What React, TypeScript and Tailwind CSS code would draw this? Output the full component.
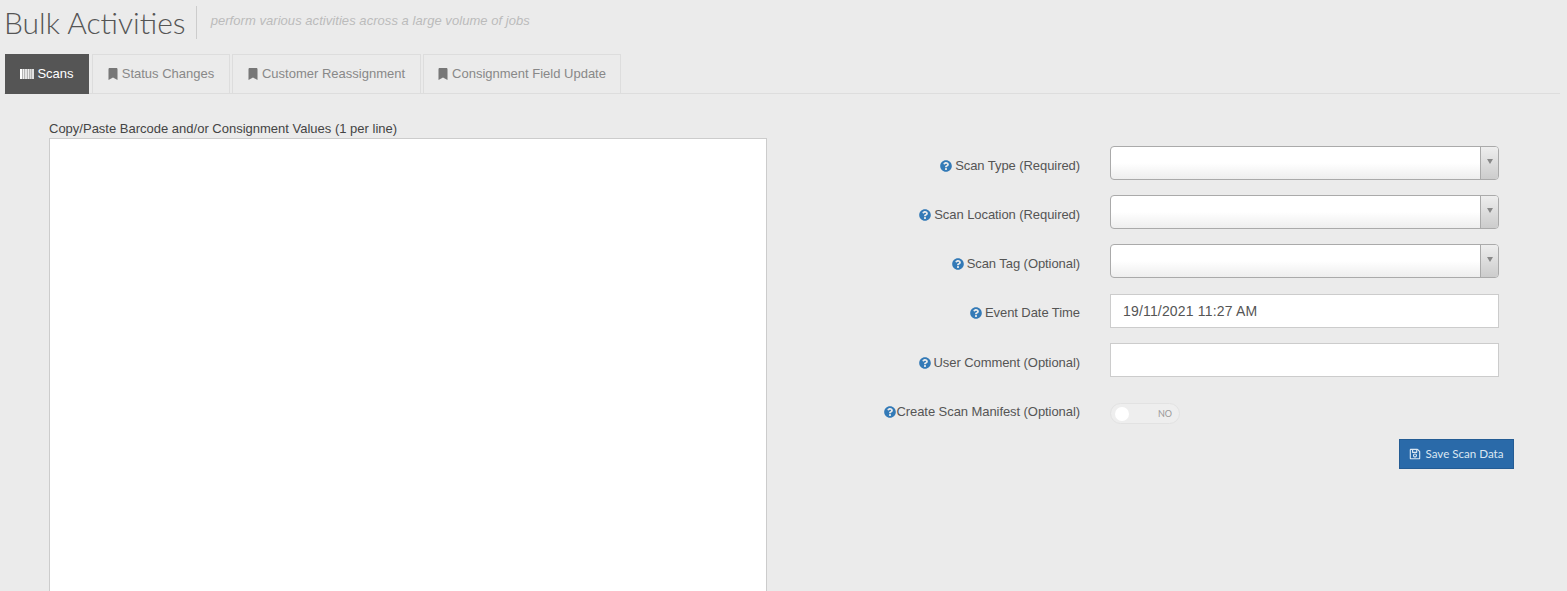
import { FaBookmark, FaQuestionCircle, FaRegSave } from "react-icons/fa";

const tabs = [
  { label: "Status Changes", width: "w-[138px]" },
  { label: "Customer Reassignment", width: "w-[189px]" },
  { label: "Consignment Field Update", width: "w-[198px]" },
];

function HelpIcon() {
  return <FaQuestionCircle className="text-[12px] text-[#337ab7] shrink-0" />;
}

function FieldLabel({ text, tight, raised }: { text: string; tight?: boolean; raised?: boolean }) {
  return (
    <label className={`w-[300px] flex items-center justify-end text-[13px] tracking-[-0.07px] text-[#555] ${raised ? "pt-[4px]" : "pt-[6px]"} ${tight ? "gap-0" : "gap-[3px]"}`}>
      <HelpIcon />
      <span>{text}</span>
    </label>
  );
}

function SelectBox() {
  return (
    <div className="w-[389px] h-[34px] flex rounded-[4px] border border-[#aaa] bg-gradient-to-b from-white from-50% to-[#eeeeee] overflow-hidden">
      <div className="flex-1" />
      <div className="w-[18px] border-l border-[#aaa] bg-gradient-to-b from-[#eeeeee] to-[#cccccc] flex items-center justify-center">
        <div className="w-0 h-0 mb-[3px] border-x-[3.5px] border-x-transparent border-t-[5px] border-t-[#888]" />
      </div>
    </div>
  );
}

function TextBox({ value }: { value?: string }) {
  return (
    <div className="w-[389px] h-[34px] border border-[#ccc] bg-white px-3 flex items-center text-[14px] tracking-[0.17px] text-[#555]">
      {value}
    </div>
  );
}

function BarcodeIcon() {
  return (
    <svg width="14" height="10" viewBox="0 0 14 10" className="shrink-0">
      <rect x="0" width="14" height="10" fill="#b5b5b5" />
      <rect x="0" width="2" height="10" fill="#fff" />
      <rect x="3" width="1" height="10" fill="#f0f0f0" />
      <rect x="5" width="2" height="10" fill="#e4e4e4" />
      <rect x="8" width="1" height="10" fill="#f0f0f0" />
      <rect x="10" width="1" height="10" fill="#dcdcdc" />
      <rect x="12" width="2" height="10" fill="#e0e0e0" />
    </svg>
  );
}

export default function App() {
  return (
    <div className="h-[591px] overflow-hidden bg-[#ebebeb] font-['Liberation_Sans',sans-serif]">
      <div className="h-[54px] pl-[4px] pt-[6px] flex items-start">
        <h1 className="font-['Lato',sans-serif] font-light text-[30px] leading-[33px] text-[#555] pr-[10px] border-r border-[#ccc]">
          Bulk Activities
        </h1>
        <span className="pl-[14px] pt-[7px] text-[13px] leading-[16px] italic tracking-[0.05px] text-[#bbb]">
          perform various activities across a large volume of jobs
        </span>
      </div>

      <div className="ml-[4px] mr-[7px] h-[40px] flex gap-[2px] border-b border-[#ddd]">
        <div className="w-[84px] h-[40px] ml-px mr-[1px] bg-[#555] flex items-center justify-center gap-[3px] text-[13px] text-white">
          <BarcodeIcon />
          <span>Scans</span>
        </div>
        {tabs.map((tab) => (
          <div
            key={tab.label}
            className={`${tab.width} h-[39px] pr-px border border-b-0 border-[#ddd] flex items-center justify-center gap-[3px] text-[13px] text-[#888]`}
          >
            <FaBookmark className="text-[12px] text-[#777]" />
            <span>{tab.label}</span>
          </div>
        ))}
      </div>

      <div className="flex pl-[49px] pt-[27px]">
        <div className="w-[718px]">
          <p className="text-[13px] leading-[15px] pb-[2px] text-[#444]">
            Copy/Paste Barcode and/or Consignment Values (1 per line)
          </p>
          <div className="h-[600px] border border-[#ccc] bg-white" />
        </div>

        <div className="ml-[13px] pt-[25px] flex flex-col">
          <div className="flex flex-col gap-[15px]">
            <div className="flex gap-[30px]">
              <FieldLabel text="Scan Type (Required)" />
              <SelectBox />
            </div>
            <div className="flex gap-[30px]">
              <FieldLabel text="Scan Location (Required)" />
              <SelectBox />
            </div>
            <div className="flex gap-[30px]">
              <FieldLabel text="Scan Tag (Optional)" />
              <SelectBox />
            </div>
            <div className="flex gap-[30px] mt-px">
              <FieldLabel text="Event Date Time" raised />
              <TextBox value="19/11/2021 11:27 AM" />
            </div>
            <div className="flex gap-[30px]">
              <FieldLabel text="User Comment (Optional)" />
              <TextBox />
            </div>
            <div className="flex gap-[30px] h-[34px]">
              <FieldLabel text="Create Scan Manifest (Optional)" tight />
              <div className="w-[70px] h-[21px] mt-[11px] rounded-full border border-[#e2e2e2] bg-[#eeeeee] flex items-center justify-between pl-[4px] pr-[7px]">
                <div className="w-[14px] h-[14px] rounded-full bg-white" />
                <span className="font-['Lato',sans-serif] text-[9px] text-[#999]">NO</span>
              </div>
            </div>
          </div>
          <div className="flex justify-end mt-[13px] -mr-[15px]">
            <button className="w-[115px] h-[30px] bg-[#2a6aa9] border border-[#245c94] flex items-center justify-center gap-[4px] font-['Lato',sans-serif] text-[11.6px] text-[#dbe7f2]">
              <FaRegSave className="text-[12px]" />
              <span>Save Scan Data</span>
            </button>
          </div>
        </div>
      </div>
    </div>
  );
}
